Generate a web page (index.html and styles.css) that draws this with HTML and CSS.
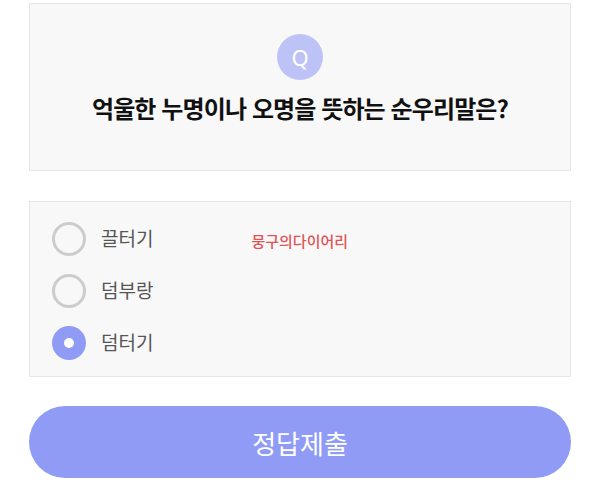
FILE: index.html
```html
<!DOCTYPE html>
<html lang="ko">
<head>
<meta charset="utf-8">
<link rel="stylesheet" href="styles.css">
</head>
<body>
<div class="page">
  <section class="question-card">
    <div class="q-badge">Q</div>
    <h1 class="question">억울한 누명이나 오명을 뜻하는 순우리말은?</h1>
  </section>
  <section class="options-card">
    <div class="options">
      <label class="option"><span class="radio"></span><span class="opt-text">끌터기</span></label>
      <label class="option"><span class="radio"></span><span class="opt-text">덤부랑</span></label>
      <label class="option"><span class="radio checked"></span><span class="opt-text">덤터기</span></label>
    </div>
    <div class="watermark">뭉구의다이어리</div>
  </section>
  <button class="submit">정답제출</button>
</div>
</body>
</html>
```
FILE: styles.css
```css
html, body {
  margin: 0;
  padding: 0;
  background: #ffffff;
}
body {
  font-family: "Noto Sans CJK KR", "Noto Sans", sans-serif;
}
.page {
  width: 542px;
  margin: 0 auto;
  padding-top: 3px;
  display: flex;
  flex-direction: column;
}
.question-card {
  height: 168px;
  background: #f8f8f9;
  border: 1px solid #e6e6e6;
  display: flex;
  flex-direction: column;
  align-items: center;
  padding-top: 30px;
  box-sizing: border-box;
}
.q-badge {
  width: 46px;
  height: 46px;
  border-radius: 50%;
  background: #bec3f7;
  color: #ffffff;
  font-family: "Noto Sans", sans-serif;
  font-size: 22px;
  line-height: 46px;
  text-align: center;
}
.question {
  margin: 12px 0 0;
  font-size: 24px;
  font-weight: 700;
  color: #111111;
  letter-spacing: -0.9px;
  line-height: 32px;
}
.options-card {
  margin-top: 30px;
  height: 176px;
  box-sizing: border-box;
  background: #f8f8f9;
  border: 1px solid #e6e6e6;
  display: flex;
  padding: 20px 0 0 22px;
}
.options {
  display: flex;
  flex-direction: column;
  gap: 18px;
}
.option {
  display: flex;
  align-items: center;
  gap: 15px;
  height: 34px;
}
.radio {
  width: 34px;
  height: 34px;
  box-sizing: border-box;
  border-radius: 50%;
  border: 3px solid #cccccc;
  background: #f8f8f9;
  position: relative;
}
.radio.checked {
  border: none;
  background: #8f9bf5;
}
.radio.checked::after {
  content: "";
  position: absolute;
  left: 12px;
  top: 12px;
  width: 10px;
  height: 10px;
  border-radius: 50%;
  background: #ffffff;
}
.opt-text {
  font-size: 19px;
  color: #555555;
  line-height: 34px;
  margin-top: -2px;
}
.watermark {
  margin-left: 98px;
  margin-top: 9px;
  font-size: 15px;
  font-weight: 500;
  color: #e05656;
  line-height: 20px;
}
.submit {
  margin-top: 29px;
  height: 72px;
  border: none;
  border-radius: 36px;
  background: #8f9bf5;
  color: #ffffff;
  font-family: "Noto Sans CJK KR", "Noto Sans", sans-serif;
  font-size: 26px;
  padding: 0;
}
```
